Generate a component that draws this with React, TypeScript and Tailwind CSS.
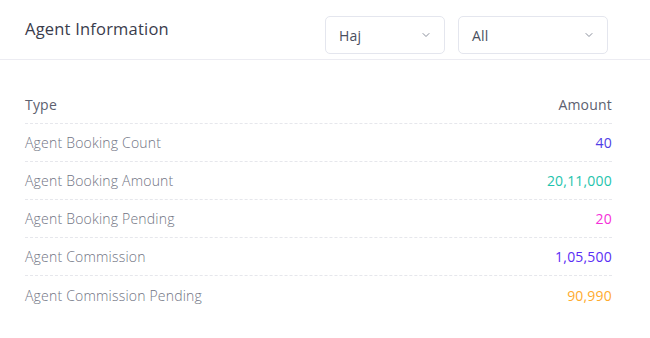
import { ChevronDown } from "lucide-react";

const rows = [
  { label: "Agent Booking Count", value: "40", color: "text-[#4f3ce6]" },
  { label: "Agent Booking Amount", value: "20,11,000", color: "text-[#1fc4ad]" },
  { label: "Agent Booking Pending", value: "20", color: "text-[#f52fd8]" },
  { label: "Agent Commission", value: "1,05,500", color: "text-[#5a2ef5]" },
  { label: "Agent Commission Pending", value: "90,990", color: "text-[#ffab2e]" },
];

const Select = ({ value, width }: { value: string; width: string }) => (
  <div
    className={`${width} h-[38px] flex items-center justify-between pl-[13px] pr-[12px] border border-[#e4e6ee] rounded-[5px] bg-white`}
  >
    <span className="text-[14px] text-[#4a4f5e] tracking-[0.2px]">{value}</span>
    <ChevronDown className="w-[12px] h-[12px] text-[#8a8f9c]" strokeWidth={2} />
  </div>
);

const App = () => {
  return (
    <div className="w-[650px] h-[338px] bg-white font-['Open_Sans',sans-serif]">
      <div className="h-[60px] flex items-start justify-between pl-[25px] pr-[42px] border-b border-[#ececf2]">
        <h2 className="mt-[17px] text-[16.5px] font-medium text-[#3a3c4c] tracking-[0.2px]">Agent Information</h2>
        <div className="flex gap-[13px] mt-[16px]">
          <Select value="Haj" width="w-[120px]" />
          <Select value="All" width="w-[150px]" />
        </div>
      </div>

      <div className="pl-[25px] pr-[38px] pt-[33px]">
        <div className="flex justify-between items-center h-[31px] pb-[7px] text-[14px] tracking-[0.2px] text-[#5d6170] border-b border-dashed border-[#e6e7ec]">
          <span>Type</span>
          <span>Amount</span>
        </div>
        {rows.map((row, i) => (
          <div
            key={row.label}
            className={`flex justify-between items-center h-[38px] text-[14px] tracking-[0.2px] ${
              i < rows.length - 1 ? "border-b border-dashed border-[#e6e7ec]" : ""
            }`}
          >
            <span className="text-[#707483] font-light">{row.label}</span>
            <span className={`${row.color}`}>{row.value}</span>
          </div>
        ))}
      </div>
    </div>
  );
};

export default App;
